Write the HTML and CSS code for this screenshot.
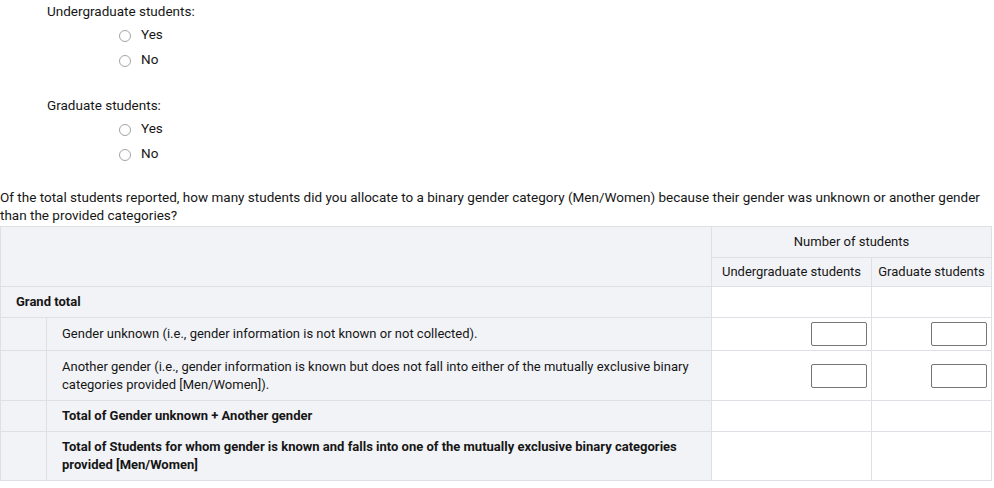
FILE: index.html
```
<!DOCTYPE html>
<html>

<head>
    <link rel="stylesheet" href="styles.css">
</head>

<body>
    <div class="block">
        <div class="block-label">Undergraduate students:</div>
        <label class="option"><input type="radio" name="ug"><span>Yes</span></label>
        <label class="option"><input type="radio" name="ug"><span>No</span></label>
    </div>
    <div class="block">
        <div class="block-label">Graduate students:</div>
        <label class="option"><input type="radio" name="gr"><span>Yes</span></label>
        <label class="option"><input type="radio" name="gr"><span>No</span></label>
    </div>

    <p class="question">Of the total students reported, how many students did you allocate to a binary gender category (Men/Women) because their gender was unknown or another gender than the provided categories?</p>

    <table class="grid">
        <colgroup>
            <col class="c-indent">
            <col class="c-label">
            <col class="c-ug">
            <col class="c-gr">
        </colgroup>
        <tr class="h1">
            <th class="lbl" colspan="2" rowspan="2"></th>
            <th class="lbl head" colspan="2">Number of students</th>
        </tr>
        <tr class="h2">
            <th class="lbl head">Undergraduate students</th>
            <th class="lbl head">Graduate students</th>
        </tr>
        <tr class="r31">
            <td class="lbl strong" colspan="2">Grand total</td>
            <td></td>
            <td></td>
        </tr>
        <tr class="r33">
            <td class="lbl"></td>
            <td class="lbl sub">Gender unknown (i.e., gender information is not known or not collected).</td>
            <td class="num"><input type="text"></td>
            <td class="num"><input type="text"></td>
        </tr>
        <tr class="r50">
            <td class="lbl"></td>
            <td class="lbl sub">Another gender (i.e., gender information is known but does not fall into either of the mutually exclusive binary categories provided [Men/Women]).</td>
            <td class="num"><input type="text"></td>
            <td class="num"><input type="text"></td>
        </tr>
        <tr class="r31">
            <td class="lbl"></td>
            <td class="lbl sub strong">Total of Gender unknown + Another gender</td>
            <td></td>
            <td></td>
        </tr>
        <tr class="r49">
            <td class="lbl"></td>
            <td class="lbl sub strong">Total of Students for whom gender is known and falls into one of the mutually exclusive binary categories provided [Men/Women]</td>
            <td></td>
            <td></td>
        </tr>
    </table>
</body>

</html>
```

FILE: styles.css
```
* {
    padding: 0;
    margin: 0;
    box-sizing: border-box;
}

body {
    font-family: Roboto, "Liberation Sans", sans-serif;
    font-size: 13.5px;
    line-height: 18px;
    color: #161616;
    background: #fff;
    padding-top: 2px;
}

.block {
    margin-bottom: 25px;
}

.block + .block {
    margin-bottom: 0;
}

.block-label {
    padding-left: 47px;
    margin-bottom: 1px;
}

.option {
    display: flex;
    align-items: center;
    height: 25px;
    padding-left: 119px;
}

.option input {
    appearance: none;
    -webkit-appearance: none;
    width: 12px;
    height: 12px;
    border: 1px solid #a3a3a3;
    border-radius: 50%;
    margin-top: 4px;
    background: #fff;
}

.option span {
    margin-left: 10px;
}

.question {
    margin-top: 23px;
    margin-bottom: 2px;
}

.grid {
    border-collapse: collapse;
    table-layout: fixed;
    width: 991px;
    font-size: 13px;
    line-height: 18px;
}

.c-indent {
    width: 46px;
}

.c-label {
    width: 665px;
}

.c-ug {
    width: 160px;
}

.c-gr {
    width: 120px;
}

.grid th,
.grid td {
    border: 1px solid #dde0e5;
    padding: 0 15px;
    vertical-align: middle;
    text-align: left;
    font-weight: normal;
}

.grid .lbl {
    background: #f2f3f6;
}

.grid .head {
    text-align: center;
    padding: 0 4px;
}

.grid .strong {
    font-weight: bold;
}

.grid .num {
    text-align: right;
    padding: 0 4px;
}

.num input {
    width: 56px;
    height: 24px;
    border: 1px solid #767676;
    border-radius: 2px;
    vertical-align: middle;
    font: inherit;
}

.h1 {
    height: 31px;
}

.h2 {
    height: 29px;
}

.r31 {
    height: 31px;
}

.r33 {
    height: 33px;
}

.r50 {
    height: 50px;
}

.r49 {
    height: 49px;
}
```
